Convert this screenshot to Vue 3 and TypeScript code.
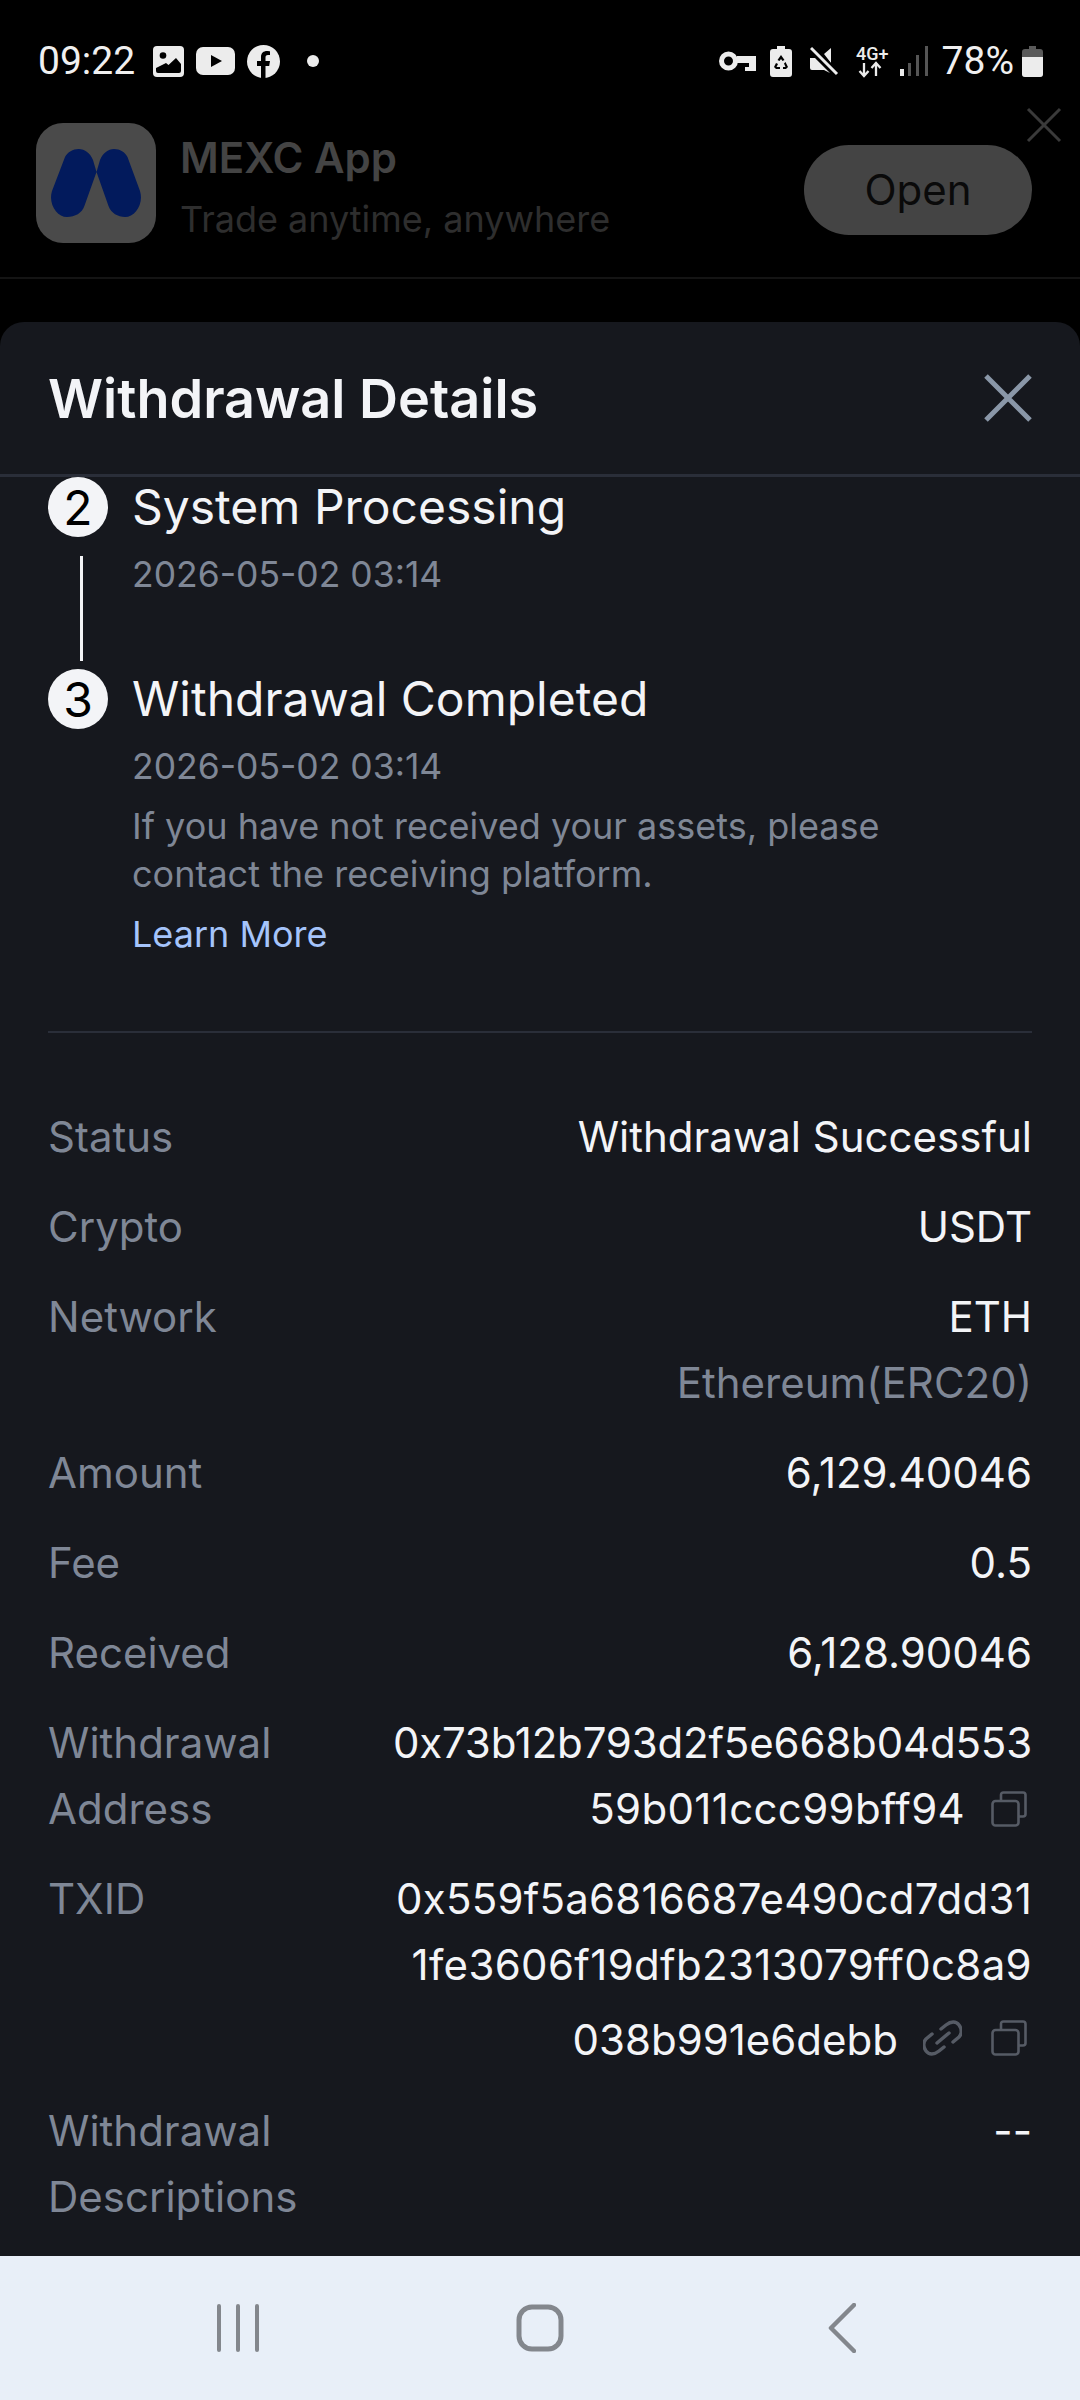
<script setup lang="ts">
interface Row { label: string; value: string }
const simpleTop: Row[] = [
  { label: 'Status', value: 'Withdrawal Successful' },
  { label: 'Crypto', value: 'USDT' },
]
const simpleMid: Row[] = [
  { label: 'Amount', value: '6,129.40046' },
  { label: 'Fee', value: '0.5' },
  { label: 'Received', value: '6,128.90046' },
]
</script>

<template>
  <div class="phone">
    <div class="status">
      <div class="st-left">
        <span class="time">09:22</span>
        <svg class="ic" width="31" height="31" viewBox="0 0 31 31"><rect width="31" height="31" rx="4" fill="#ececec"/><circle cx="10" cy="9.500" r="3.300" fill="#000"/><path d="M3 22l10-5 2.500 2L23 12l5 6v7q0 2-2 2H5q-2 0-2-2z" fill="#000"/></svg>
        <svg class="ic" width="39" height="28" viewBox="0 0 39 28"><rect width="39" height="28" rx="7" fill="#ececec"/><path d="M15 8l11 6-11 6z" fill="#000"/></svg>
        <svg class="fb" width="33" height="33" viewBox="0 0 33 33"><circle cx="16.500" cy="16.500" r="16.500" fill="#ececec"/><path d="M14 33V21h-4v-5h4v-4c0-4 2.500-6 6-6 1.500 0 3 .3 3 .3V10h-2c-2 0-2.500 1-2.500 2.500V16h4.500l-.8 5H18.500v12z" fill="#000"/></svg>
        <span class="dot"></span>
      </div>
      <div class="st-right">
        <svg class="s-key" width="37" height="21" viewBox="0 0 37 21"><circle cx="9.500" cy="10" r="7" fill="none" stroke="#ececec" stroke-width="5"/><path d="M18 5h19v15H26v-4h4v-4H18z" fill="#ececec"/></svg>
        <svg class="s-rec" width="22" height="31" viewBox="0 0 22 31"><path d="M7 0h8v3h4q3 0 3 3v22q0 3-3 3H3q-3 0-3-3V6q0-3 3-3h4z" fill="#ececec"/><path d="M11 9l3.500 5-2 1-1.500-2-1.500 2-2-1zM15.500 16l2.500 5-2 2h-3v-2h2.500l-1.500-3.500zM6 17l-2 4 2 2h4v-2H6.500L8 18z" fill="#000"/></svg>
        <svg class="s-mute" width="29" height="30" viewBox="0 0 29 30"><path d="M14 8l7-6v15zM0 12h5l15 15-6-3H2q-2 0-2-2z" fill="#ececec"/><path d="M1 0l27 28" stroke="#000" stroke-width="5"/><path d="M1 2l26 26" stroke="#ececec" stroke-width="3"/></svg>
        <svg class="s-net" width="33" height="31" viewBox="0 0 33 31"><text x="0" y="14" class="net-t">4G+</text><path d="M8 17v13M3.500 25l4.500 5 4.500-5M20 30V17M15.500 22l4.500-5 4.500 5" fill="none" stroke="#ececec" stroke-width="2.300"/></svg>
        <svg class="s-sig" width="28" height="30" viewBox="0 0 28 30"><rect x="0" y="23" width="4" height="7" fill="#ececec"/><rect x="8" y="17" width="3" height="13" fill="#555"/><rect x="16" y="9" width="3" height="21" fill="#555"/><rect x="25" y="0" width="3" height="30" fill="#555"/></svg>
        <span class="pct">78%</span>
        <svg width="21" height="31" viewBox="0 0 21 31"><path d="M7 0h7v3h4q3 0 3 3v22q0 3-3 3H3q-3 0-3-3V6q0-3 3-3h4z" fill="#5a5a5a"/><path d="M0 11h21v17q0 3-3 3H3q-3 0-3-3z" fill="#ececec"/></svg>
      </div>
    </div>

    <div class="banner">
      <div class="app-icon">
        <svg width="90" height="68" viewBox="0 0 90 68"><path d="M27.600 0C34 0 39 4 42 11l3.500 12L49 11C52 4 57 0 63 0c6 0 11 3 13.500 8L89 42c4 13-5 26-15 26-7 0-14-4-16.500-11L45.500 23 33.400 57C31 64 24 68 16 68 6 68-3 55 1 42L14 8C16.500 3 22 0 27.600 0z" fill="#021a5c"/></svg>
      </div>
      <div class="app-text">
        <div class="app-name">MEXC App</div>
        <div class="app-sub">Trade anytime, anywhere</div>
      </div>
      <div class="open">Open</div>
      <svg class="banner-x" width="36" height="36" viewBox="0 0 36 36"><path d="M2 2l32 32M34 2L2 34" stroke="#3a3a3a" stroke-width="3" fill="none"/></svg>
    </div>

    <div class="sheet">
      <div class="head">
        <span class="title">Withdrawal Details</span>
        <svg width="48" height="48" viewBox="0 0 48 48"><path d="M2 2l44 44M46 2L2 46" stroke="#8a97a8" stroke-width="5" fill="none"/></svg>
      </div>
      <div class="scroll">
        <div class="step step-two">
          <div class="rail">
            <span class="num">2</span>
            <span class="line"></span>
          </div>
          <div class="step-body">
            <div class="step-title">System Processing</div>
            <div class="step-date">2026-05-02 03:14</div>
          </div>
        </div>
        <div class="step">
          <div class="rail"><span class="num">3</span></div>
          <div class="step-body">
            <div class="step-title">Withdrawal Completed</div>
            <div class="step-date">2026-05-02 03:14</div>
            <div class="step-note">If you have not received your assets, please contact the receiving platform.</div>
            <div class="learn">Learn More</div>
          </div>
        </div>
        <div class="rule"></div>
        <div class="rows">
          <div v-for="r in simpleTop" :key="r.label" class="row">
            <span class="k">{{ r.label }}</span>
            <span class="v">{{ r.value }}</span>
          </div>
          <div class="row">
            <span class="k">Network</span>
            <div class="v"><div>ETH</div><div class="muted">Ethereum(ERC20)</div></div>
          </div>
          <div v-for="r in simpleMid" :key="r.label" class="row">
            <span class="k">{{ r.label }}</span>
            <span class="v">{{ r.value }}</span>
          </div>
          <div class="row">
            <span class="k narrow">Withdrawal Address</span>
            <div class="v">
              <div class="tight">0x73b12b793d2f5e668b04d553</div>
              <div class="with-ic"><span class="loose">59b011ccc99bff94</span>
                <svg class="copy" width="36" height="36" viewBox="0 0 36 36"><path d="M10 9V4q0-2.500 2.500-2.500H32q2.500 0 2.500 2.500v19q0 2.500-2.500 2.500h-4" fill="none" stroke="#565b65" stroke-width="2.600"/><rect x="1.500" y="10" width="26" height="24.500" rx="3" fill="none" stroke="#565b65" stroke-width="2.600"/></svg>
              </div>
            </div>
          </div>
          <div class="row">
            <span class="k">TXID</span>
            <div class="v">
              <div class="loose-s">0x559f5a6816687e490cd7dd31</div>
              <div class="loose">1fe3606f19dfb2313079ff0c8a9</div>
              <div class="with-ic tall">038b991e6debb
                <svg class="link" width="39" height="36" viewBox="0 0 39 36"><path d="M18 9l5-4c5-4 10-4 13 0s3 9 0 12l-6 5M21 27l-5 4c-5 4-10 4-13 0s-3-9 0-12l6-5M14 23l12-10" fill="none" stroke="#565b65" stroke-width="3.500" stroke-linecap="round"/></svg>
                <svg class="copy copy-b" width="36" height="36" viewBox="0 0 36 36"><path d="M10 9V4q0-2.500 2.500-2.500H32q2.500 0 2.500 2.500v19q0 2.500-2.500 2.500h-4" fill="none" stroke="#565b65" stroke-width="2.600"/><rect x="1.500" y="10" width="26" height="24.500" rx="3" fill="none" stroke="#565b65" stroke-width="2.600"/></svg>
              </div>
            </div>
          </div>
          <div class="row">
            <span class="k narrow">Withdrawal Descriptions</span>
            <span class="v">--</span>
          </div>
        </div>
      </div>
    </div>

    <div class="nav">
      <svg width="44" height="48" viewBox="0 0 44 48"><path d="M3 2v44M22 2v44M41 2v44" stroke="#83878d" stroke-width="4" stroke-linecap="round"/></svg>
      <svg width="48" height="48" viewBox="0 0 48 48"><rect x="3" y="3" width="42" height="42" rx="13" fill="none" stroke="#83878d" stroke-width="5"/></svg>
      <svg width="28" height="50" viewBox="0 0 28 50"><path d="M26 2L3 25l23 23" fill="none" stroke="#83878d" stroke-width="4.500" stroke-linecap="round" stroke-linejoin="round"/></svg>
    </div>
  </div>
</template>

<style>
html, body { margin: 0; background: #000; }
</style>

<style scoped>
.phone {
  width: 1080px;
  height: 2400px;
  background: #000;
  display: flex;
  flex-direction: column;
  overflow: hidden;
  font-family: Inter, "Liberation Sans", sans-serif;
}
.status {
  height: 122px;
  flex: none;
  display: flex;
  justify-content: space-between;
  align-items: center;
  padding: 0 37px 0 38px;
  box-sizing: border-box;
  color: #f0f0f0;
  font-family: Roboto, sans-serif;
}
.st-left, .st-right { display: flex; align-items: center; }
.time { font-size: 39px; margin-right: 18px; }
.ic { margin-right: 12px; }
.dot { width: 12px; height: 12px; background: #ececec; border-radius: 50%; margin-left: 27px; }
.s-key { margin-right: 14px; }
.s-rec { margin-right: 18px; }
.s-mute { margin-right: 17px; }
.s-net { margin-right: 11px; overflow: visible; }
.s-sig { margin-right: 14px; }
.pct { font-size: 39px; margin-right: 8px; }
.net-t { font-size: 18px; font-weight: 500; fill: #ececec; font-family: Roboto, sans-serif; }
.banner {
  position: relative;
  flex: none;
  display: flex;
  align-items: center;
  padding: 0 48px 34px 36px;
  box-sizing: border-box;
  border-bottom: 2px solid #141414;
  height: 157px;
}
.app-icon {
  width: 120px;
  height: 120px;
  border-radius: 27px;
  background: #4a4a4a;
  display: flex;
  align-items: center;
  justify-content: center;
  flex: none;
}
.app-text { margin-left: 24px; margin-top: 8px; flex: 1; }
.app-name { font-size: 42px; font-weight: 600; color: #444; line-height: 50px; }
.app-sub { font-size: 36px; color: #2e2e2e; line-height: 44px; margin-top: 14px; }
.open {
  width: 228px;
  height: 90px;
  border-radius: 45px;
  background: #444;
  color: #0a0a0a;
  font-size: 42px;
  display: flex;
  align-items: center;
  justify-content: center;
  margin-top: 14px;
}
.banner-x { position: absolute; right: 18px; top: -15px; }
.sheet {
  margin-top: 43px;
  flex: 1;
  min-height: 0;
  background: #16181e;
  border-radius: 24px 24px 0 0;
  display: flex;
  flex-direction: column;
  overflow: hidden;
}
.head {
  height: 155px;
  flex: none;
  box-sizing: border-box;
  display: flex;
  align-items: center;
  justify-content: space-between;
  padding: 0 48px;
  border-bottom: 3px solid #2a2e39;
}
.title { font-size: 54px; font-weight: 600; color: #f3f4f7; }
.scroll { flex: 1; min-height: 0; overflow: hidden; padding: 0 48px; }
.step { display: flex; }
.step-two { height: 192px; }
.rail { width: 85px; flex: none; display: flex; flex-direction: column; }
.num {
  width: 60px;
  height: 60px;
  border-radius: 50%;
  background: #f3f4f7;
  color: #000;
  font-size: 48px;
  display: flex;
  align-items: center;
  justify-content: center;
  flex: none;
}
.line { width: 3px; height: 105px; background: #f3f4f7; margin: 19px 0 0 32px; }
.step-body { flex: 1; margin-left: -1px; }
.step-title { font-size: 48px; line-height: 60px; color: #f3f4f7; }
.step-date { font-size: 35.500px; line-height: 44px; color: #7f8796; margin-top: 16px; }
.step-note { font-size: 36px; line-height: 48px; color: #7f8796; margin-top: 13px; max-width: 800px; }
.learn { font-size: 36px; line-height: 48px; color: #a5c4fb; margin-top: 12px; }
.rule { height: 2px; background: #2a2e39; margin-top: 73px; }
.rows { display: flex; flex-direction: column; gap: 24px; padding-top: 71px; }
.row { display: flex; justify-content: space-between; font-size: 42px; line-height: 66px; }
.k { color: #7f8796; flex: none; }
.narrow { width: 270px; }
.v { color: #f3f4f7; text-align: right; }
.muted { color: #7f8796; }
.tight { letter-spacing: -0.17px; }
.loose { letter-spacing: 0.34px; }
.loose-s { letter-spacing: 0.23px; }
.with-ic { display: flex; justify-content: flex-end; align-items: center; }
.tall { height: 75px; align-items: flex-end; margin-bottom: 1px; }
.tall svg { margin-bottom: 17px; }
.copy { margin-left: 26px; margin-right: 5px; }
.copy-b { margin-left: 29px; }
.link { margin-left: 25px; }
.nav {
  height: 144px;
  flex: none;
  background: #e8eff8;
  display: grid;
  grid-template-columns: repeat(3, 302px);
  justify-items: center;
  align-items: center;
  padding: 0 87px;
  box-sizing: border-box;
}
</style>
